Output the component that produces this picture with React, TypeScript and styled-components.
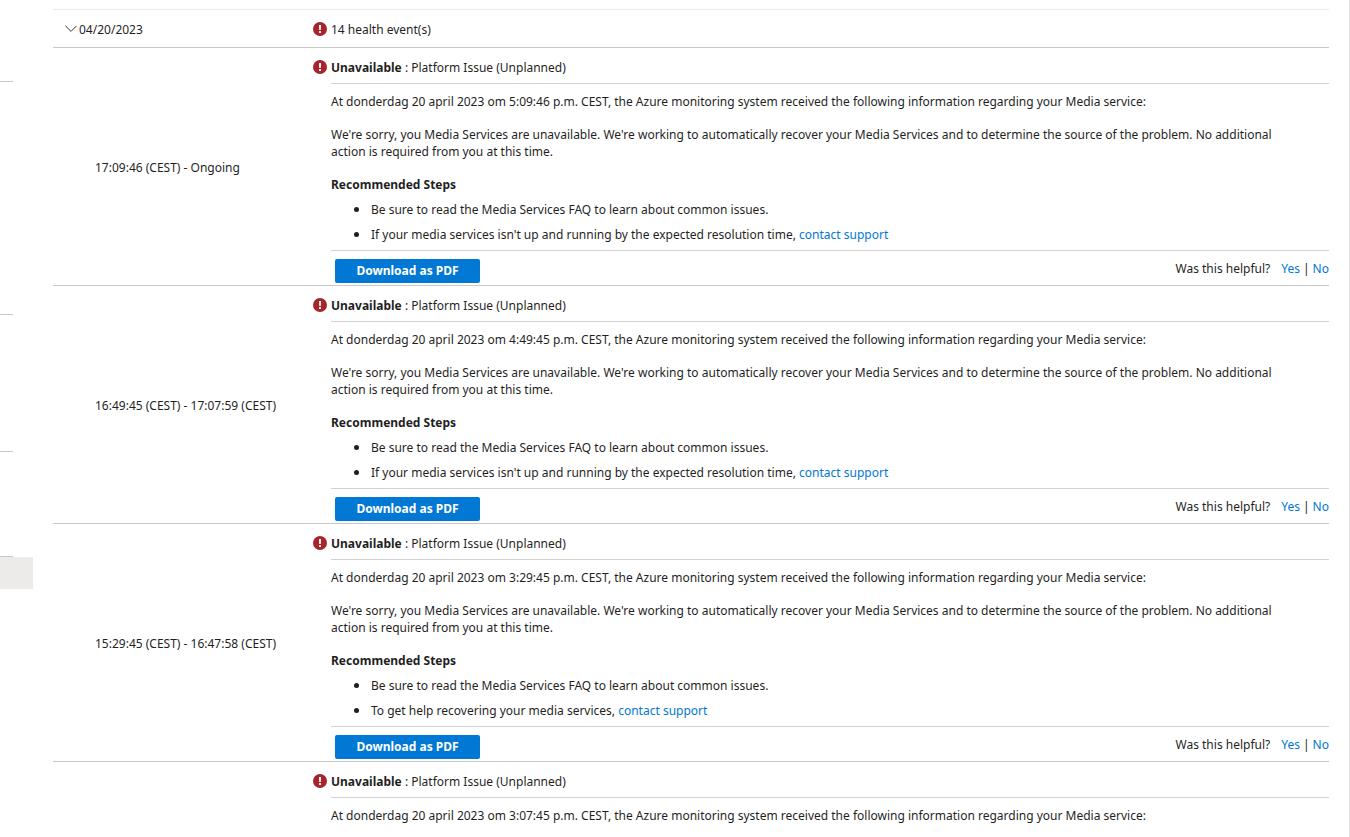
import React from "react";
import styled, { createGlobalStyle } from "styled-components";

const GlobalStyle = createGlobalStyle`
  *, *::before, *::after { box-sizing: border-box; }
  body {
    margin: 0;
    background: #fff;
    color: #1f1f1f;
    font-family: "Segoe UI", "Noto Sans", "Open Sans", sans-serif;
    font-size: 12px;
    line-height: 17px;
  }
  p, h3, ul { margin: 0; }
`;

const Page = styled.div`
  display: flex;
  height: 100vh;
  overflow: hidden;
  border-right: 1px solid #e6e6e6;
`;

const Rail = styled.aside`
  flex: 0 0 33px;
`;

const RailGroup = styled.div<{ $height: number }>`
  width: 13px;
  height: ${({ $height }) => $height}px;
  border-bottom: 1px solid #c8c8c8;
`;

const RailSelected = styled.div`
  height: 32px;
  background: #edebe9;
`;

const History = styled.main`
  flex: 1;
  min-width: 0;
  padding: 9px 20px 0;
`;

const DayRow = styled.div`
  display: grid;
  grid-template-columns: 260px 1fr;
  align-items: center;
  height: 39px;
  border-top: 1px solid #eaeaea;
  border-bottom: 1px solid #c8c8c8;
`;

const DayToggle = styled.button`
  display: flex;
  align-items: center;
  gap: 2px;
  margin: 0;
  padding: 2px 0 0 12px;
  border: 0;
  background: none;
  color: inherit;
  font: inherit;
  cursor: pointer;

  svg { flex: none; margin-bottom: 2px; }
`;

const StatusLine = styled.div`
  display: flex;
  align-items: center;
  gap: 4px;
  padding-top: 2px;

  svg { flex: none; margin-bottom: 2px; }
`;

const EventRow = styled.section`
  display: grid;
  grid-template-columns: 260px 1fr;
  align-items: center;
  border-bottom: 1px solid #c8c8c8;

  &:last-child { border-bottom: 0; }
`;

const EventTime = styled.div`
  padding: 2px 0 0 42px;
`;

const EventTitle = styled(StatusLine)`
  height: 35px;
  padding-top: 4px;
`;

const EventDetail = styled.div`
  margin-left: 18px;
  border-top: 1px solid #d2d2d2;
`;

const Message = styled.div`
  display: flex;
  flex-direction: column;
  gap: 16px;
  padding: 9px 32px 7px 0;
`;

const StepsTitle = styled.h3`
  font-size: 12px;
  line-height: 17px;
  font-weight: 700;
`;

const Steps = styled.ul`
  display: flex;
  flex-direction: column;
  gap: 7px;
  margin-top: 7px;
  padding-left: 40px;

  li::marker { font-size: 15px; }
`;

const Link = styled.a`
  color: #0078d4;
  text-decoration: none;
`;

const Footer = styled.footer`
  display: flex;
  justify-content: space-between;
  align-items: flex-start;
  padding: 8px 0 2px 4px;
  border-top: 1px solid #d2d2d2;
`;

const DownloadButton = styled.button`
  width: 145px;
  height: 24px;
  padding: 0 0 2px;
  border: 0;
  border-radius: 2px;
  background: #0078d4;
  color: #fff;
  font: inherit;
  font-weight: 700;
  cursor: pointer;
`;

const Feedback = styled.div`
  display: flex;
  gap: 3px;
  padding-top: 1px;
`;

const Question = styled.span`
  margin-right: 8px;
`;

const Chevron = () => (
  <svg width="12" height="8" viewBox="0 0 12 8" fill="none" stroke="#333" aria-hidden="true">
    <path d="M.4 .8 6 6.4 11.6 .8" />
  </svg>
);

const ErrorIcon = () => (
  <svg width="14" height="14" viewBox="0 0 14 14" aria-hidden="true">
    <circle cx="7" cy="7" r="7" fill="#a4262c" />
    <path d="M6 3h2l-.2 5H6.2z" fill="#fff" />
    <rect x="6" y="9" width="2" height="2" rx=".5" fill="#fff" />
  </svg>
);

type HealthEvent = { started: string; range?: string; step?: string };

const expected = "If your media services isn't up and running by the expected resolution time,";

const events: HealthEvent[] = [
  { started: "5:09:46", range: "17:09:46 (CEST) - Ongoing", step: expected },
  { started: "4:49:45", range: "16:49:45 (CEST) - 17:07:59 (CEST)", step: expected },
  {
    started: "3:29:45",
    range: "15:29:45 (CEST) - 16:47:58 (CEST)",
    step: "To get help recovering your media services,",
  },
  { started: "3:07:45" },
];

const Event = ({ started, range, step }: HealthEvent) => (
  <EventRow>
    <EventTime>{range}</EventTime>
    <div>
      <EventTitle>
        <ErrorIcon />
        <span>
          <strong>Unavailable</strong> : Platform Issue (Unplanned)
        </span>
      </EventTitle>
      <EventDetail>
        <Message>
          <p>
            At donderdag 20 april 2023 om {started} p.m. CEST, the Azure monitoring system received the
            following information regarding your Media service:
          </p>
          {step && (
            <>
              <p>
                We're sorry, you Media Services are unavailable. We're working to automatically recover
                your Media Services and to determine the source of the problem. No additional action is
                required from you at this time.
              </p>
              <div>
                <StepsTitle>Recommended Steps</StepsTitle>
                <Steps>
                  <li>Be sure to read the Media Services FAQ to learn about common issues.</li>
                  <li>
                    {step} <Link href="#support">contact support</Link>
                  </li>
                </Steps>
              </div>
            </>
          )}
        </Message>
        {step && (
          <Footer>
            <DownloadButton type="button">Download as PDF</DownloadButton>
            <Feedback>
              <Question>Was this helpful?</Question>
              <Link href="#yes">Yes</Link>
              <span>|</span>
              <Link href="#no">No</Link>
            </Feedback>
          </Footer>
        )}
      </EventDetail>
    </div>
  </EventRow>
);

export default function App() {
  return (
    <>
      <GlobalStyle />
      <Page>
        <Rail>
          <RailGroup $height={82} />
          <RailGroup $height={233} />
          <RailGroup $height={137} />
          <RailGroup $height={105} />
          <RailSelected />
        </Rail>
        <History>
          <DayRow>
            <DayToggle type="button" aria-expanded="true">
              <Chevron />
              04/20/2023
            </DayToggle>
            <StatusLine>
              <ErrorIcon />
              14 health event(s)
            </StatusLine>
          </DayRow>
          {events.map((event) => (
            <Event key={event.started} {...event} />
          ))}
        </History>
      </Page>
    </>
  );
}
